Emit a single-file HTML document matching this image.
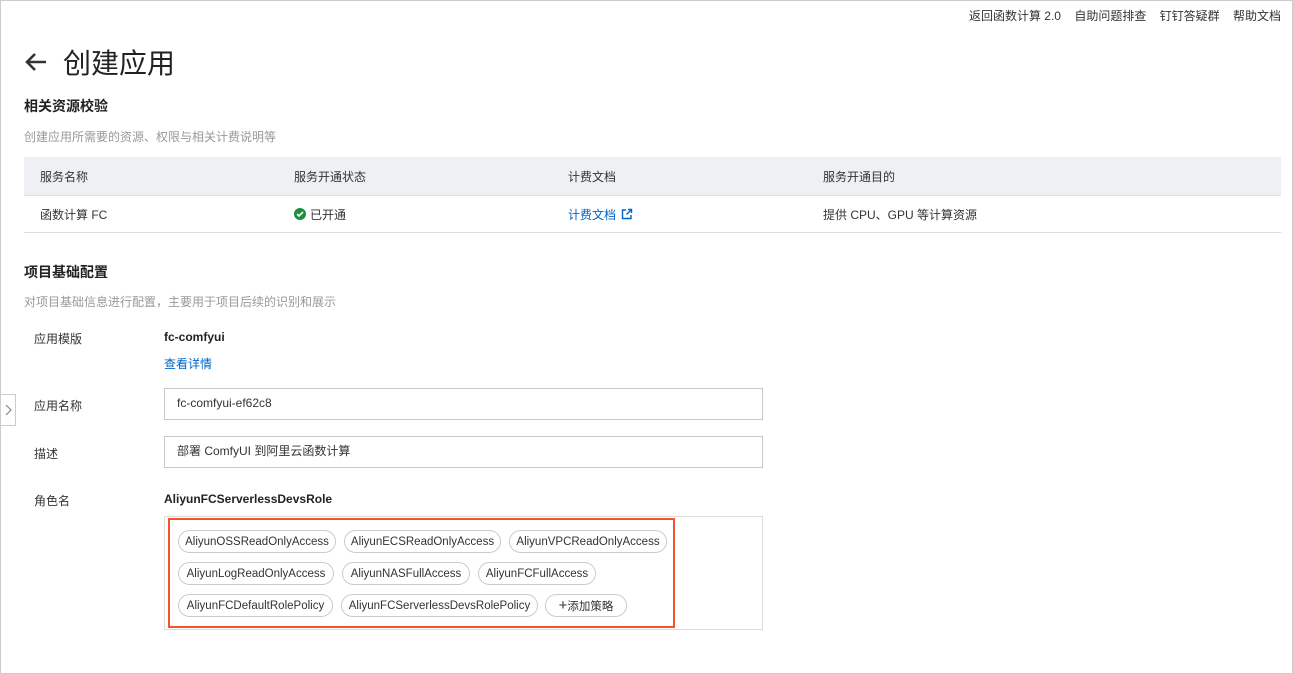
<!DOCTYPE html><html><head><meta charset="utf-8"><style>
*{margin:0;padding:0;box-sizing:border-box}
body{width:1293px;height:674px;background:#fff;font-family:"Liberation Sans","Noto Sans CJK SC",sans-serif;color:#333;font-size:12px;position:relative;overflow:hidden}
.a{position:absolute;white-space:nowrap}
.tag{position:absolute;height:23px;border:1px solid #ccc;border-radius:12px;line-height:22px;text-align:center;font-size:11.5px;color:#333}
.inp{position:absolute;left:164px;width:599px;height:32px;border:1px solid #c8c8c8;padding-left:12px;line-height:29px;font-size:12px}
</style></head><body>
<div class="a" style="left:0;top:0;width:1293px;height:674px;border:1px solid #ccc"></div>
<div class="a" style="right:12px;top:7px;font-size:12px">返回函数计算 2.0 &nbsp;&nbsp; 自助问题排查 &nbsp;&nbsp; 钉钉答疑群 &nbsp;&nbsp; 帮助文档</div>
<svg class="a" style="left:24px;top:51px" width="24" height="22" viewBox="0 0 24 22"><path d="M22 11H3M11 3L3 11l8 8" stroke="#333" stroke-width="2.6" fill="none"/></svg>
<div class="a" style="left:63px;top:42px;font-size:28px;color:#222">创建应用</div>
<div class="a" style="left:24px;top:96px;font-size:14px;font-weight:bold;color:#222">相关资源校验</div>
<div class="a" style="left:24px;top:128px;color:#999">创建应用所需要的资源、权限与相关计费说明等</div>
<div class="a" style="left:24px;top:157px;width:1257px;height:39px;background:#eef0f3;border-bottom:1px solid #ddd"></div>
<div class="a" style="left:24px;top:232px;width:1257px;height:1px;background:#ddd"></div>
<div class="a" style="left:40px;top:168px">服务名称</div>
<div class="a" style="left:294px;top:168px">服务开通状态</div>
<div class="a" style="left:568px;top:168px">计费文档</div>
<div class="a" style="left:823px;top:168px">服务开通目的</div>
<div class="a" style="left:40px;top:206px">函数计算 FC</div>
<svg class="a" style="left:294px;top:208px" width="12" height="12"><circle cx="6" cy="6" r="6" fill="#1e8e3e"/><path d="M3 6l2 2 4-4" stroke="#fff" stroke-width="1.6" fill="none"/></svg>
<div class="a" style="left:310px;top:206px">已开通</div>
<div class="a" style="left:568px;top:206px;color:#0064c8">计费文档</div>
<svg class="a" style="left:621px;top:208px" width="12" height="12"><path d="M5 2H1.5v8.5H10V7M7 1.5h3.5V5M10.5 1.5L5.5 6.5" stroke="#0064c8" stroke-width="1.4" fill="none"/></svg>
<div class="a" style="left:823px;top:206px">提供 CPU、GPU 等计算资源</div>
<div class="a" style="left:24px;top:262px;font-size:14px;font-weight:bold;color:#222">项目基础配置</div>
<div class="a" style="left:24px;top:293px;color:#999">对项目基础信息进行配置，主要用于项目后续的识别和展示</div>
<div class="a" style="left:34px;top:330px">应用模版</div>
<div class="a" style="left:164px;top:330px;font-weight:bold;color:#222">fc-comfyui</div>
<div class="a" style="left:164px;top:355px;color:#0064c8">查看详情</div>
<div class="a" style="left:34px;top:397px">应用名称</div>
<div class="inp" style="top:388px">fc-comfyui-ef62c8</div>
<div class="a" style="left:34px;top:445px">描述</div>
<div class="inp" style="top:436px">部署 ComfyUI 到阿里云函数计算</div>
<div class="a" style="left:34px;top:492px">角色名</div>
<div class="a" style="left:164px;top:492px;font-weight:bold;color:#222">AliyunFCServerlessDevsRole</div>
<div class="a" style="left:164px;top:516px;width:599px;height:114px;border:1px solid #ddd"></div>
<div class="a" style="left:168px;top:518px;width:507px;height:110px;border:2px solid #f0552e"></div>
<div class="tag" style="left:178px;top:530px;width:158px">AliyunOSSReadOnlyAccess</div>
<div class="tag" style="left:344px;top:530px;width:157px">AliyunECSReadOnlyAccess</div>
<div class="tag" style="left:509px;top:530px;width:158px">AliyunVPCReadOnlyAccess</div>
<div class="tag" style="left:178px;top:562px;width:156px">AliyunLogReadOnlyAccess</div>
<div class="tag" style="left:342px;top:562px;width:128px">AliyunNASFullAccess</div>
<div class="tag" style="left:478px;top:562px;width:118px">AliyunFCFullAccess</div>
<div class="tag" style="left:178px;top:594px;width:155px">AliyunFCDefaultRolePolicy</div>
<div class="tag" style="left:341px;top:594px;width:197px">AliyunFCServerlessDevsRolePolicy</div>
<div class="tag" style="left:545px;top:594px;width:82px"><span style="font-size:15px">+</span>添加策略</div>
<div class="a" style="left:0;top:394px;width:16px;height:32px;border:1px solid #ccc;background:#fff"></div>
<svg class="a" style="left:4px;top:404px" width="8" height="12"><path d="M2 1l5 5-5 5" stroke="#888" stroke-width="1.2" fill="none"/></svg>
</body></html>
